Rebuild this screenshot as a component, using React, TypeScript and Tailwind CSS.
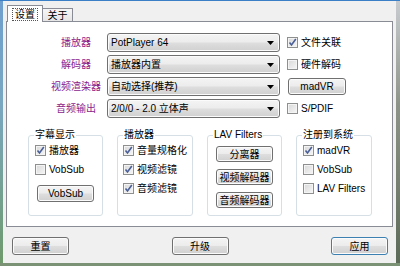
import * as React from "react";

const btn =
  "flex items-center justify-center rounded-[3px] border border-[#707070] bg-[linear-gradient(#f4f4f4,#ececec_48%,#dedede_52%,#d0d0d0)] shadow-[inset_0_0_0_1px_#fbfbfb] text-[10px] text-black";

const Check = ({ checked, label }: { checked?: boolean; label: string }) => (
  <div className="flex h-[13px] items-center gap-[3px]">
    <div className="flex h-[11px] w-[11px] items-center justify-center border border-[#8e8f8f] bg-[linear-gradient(135deg,#d8d8d8,#f6f6f6)] shadow-[inset_0_0_0_1px_#f4f4f4]">
      {checked && (
        <svg width="9" height="9" viewBox="0 0 9 9">
          <path d="M1.5 4.5 L3.5 7 L7.8 1" fill="none" stroke="#4a5f97" strokeWidth="1.6" />
        </svg>
      )}
    </div>
    <span className="whitespace-nowrap text-[10px] leading-none">{label}</span>
  </div>
);

const Combo = ({ value }: { value: string }) => (
  <div className={`${btn} h-[19px] w-[173px] !justify-between pl-[3px] pr-[5px]`}>
    <span className="whitespace-nowrap">{value}</span>
    <svg width="7" height="4" viewBox="0 0 7 4">
      <path d="M0 0 H7 L3.5 4 Z" fill="#000" />
    </svg>
  </div>
);

const Group = ({
  title,
  className,
  children,
}: {
  title: string;
  className: string;
  children: React.ReactNode;
}) => (
  <div className={`relative h-[81px] rounded-[3px] border border-[#d5dfe5] ${className}`}>
    <span className="absolute -top-[7px] left-[5px] bg-white px-[1px] text-[10px] leading-[12px]">
      {title}
    </span>
    {children}
  </div>
);

const ROWS = [
  { label: "播放器", value: "PotPlayer 64", side: <Check checked label="文件关联" /> },
  { label: "解码器", value: "播放器内置", side: <Check label="硬件解码" /> },
  {
    label: "视频渲染器",
    value: "自动选择(推荐)",
    side: <div className={`${btn} ml-[1px] h-[17px] w-[58px]`}>madVR</div>,
  },
  { label: "音频输出", value: "2/0/0 - 2.0 立体声", side: <Check label="S/PDIF" /> },
];

export default function App() {
  return (
    <div className="flex h-[266px] w-[400px] flex-col overflow-hidden border-t border-[#3b7fc6] font-['Liberation_Sans','Noto_Sans_CJK_SC',sans-serif] text-black">
      <div className="flex flex-1">
        <div className="w-[3px] bg-[linear-gradient(#6f9fce,#7aa7c0_40%,#6f9a6c)]" />
        <div className="flex flex-1 flex-col bg-[#f0f0f0] pl-[3px] pr-[3px]">
          <div className="mt-[4px] ml-[1px] flex h-[17px] items-end">
            <div className="relative z-10 flex h-[17px] w-[36px] items-start justify-center border border-b-0 border-[#898c95] bg-white pt-[2px]">
              <span className="border border-dotted border-[#555] px-[2px] text-[10px] leading-[11px]">设置</span>
            </div>
            <div className="flex h-[14px] w-[30px] items-center justify-center border border-l-0 border-b-0 border-[#898c95] bg-[linear-gradient(#f6f6f6,#e4e4e4)] text-[10px]">
              关于
            </div>
          </div>
          <div className="-mt-[1px] flex h-[206px] w-[387px] flex-col border border-[#898c95] bg-white">
            <div className="flex flex-col gap-[3px] pt-[11px] pl-[39px]">
              {ROWS.map((r) => (
                <div key={r.label} className="flex h-[19px] items-center">
                  <div className="w-[60px] text-center text-[10px] text-[#8b1c8b]">{r.label}</div>
                  <div className="ml-[1px]">
                    <Combo value={r.value} />
                  </div>
                  <div className="ml-[7px]">{r.side}</div>
                </div>
              ))}
            </div>
            <div className="mt-[17px] flex gap-[14px] pl-[21px]">
              <Group title="字幕显示" className="w-[75px]">
                <div className="flex flex-col gap-[6px] pt-[8px] pl-[6px]">
                  <Check checked label="播放器" />
                  <Check label="VobSub" />
                </div>
                <div className={`${btn} mt-[9px] ml-[8px] h-[17px] w-[57px]`}>VobSub</div>
              </Group>
              <Group title="播放器" className="w-[76px]">
                <div className="flex flex-col gap-[6px] pt-[8px] pl-[5px]">
                  <Check checked label="音量规格化" />
                  <Check checked label="视频滤镜" />
                  <Check checked label="音频滤镜" />
                </div>
              </Group>
              <Group title="LAV Filters" className="w-[75px]">
                <div className="flex flex-col items-center gap-[7px] pt-[10px]">
                  <div className={`${btn} h-[16px] w-[57px]`}>分离器</div>
                  <div className={`${btn} h-[16px] w-[57px]`}>视频解码器</div>
                  <div className={`${btn} h-[16px] w-[57px]`}>音频解码器</div>
                </div>
              </Group>
              <Group title="注册到系统" className="w-[76px]">
                <div className="flex flex-col gap-[6px] pt-[8px] pl-[6px]">
                  <Check checked label="madVR" />
                  <Check label="VobSub" />
                  <Check label="LAV Filters" />
                </div>
              </Group>
            </div>
          </div>
          <div className="mt-[10px] flex justify-between pl-[6px] pr-[5px]">
            <div className={`${btn} h-[18px] w-[57px]`}>重置</div>
            <div className={`${btn} h-[18px] w-[57px]`}>升级</div>
            <div className={`${btn} h-[18px] w-[57px] !border-[#3c7fb1] shadow-[inset_0_0_0_1px_#bfe4f8]`}>应用</div>
          </div>
        </div>
        <div className="w-[4px] bg-[linear-gradient(#c8ccd0,#8d9288_40%,#5d6a58)]" />
      </div>
      <div className="h-[3px] bg-[#7b9274]" />
    </div>
  );
}
